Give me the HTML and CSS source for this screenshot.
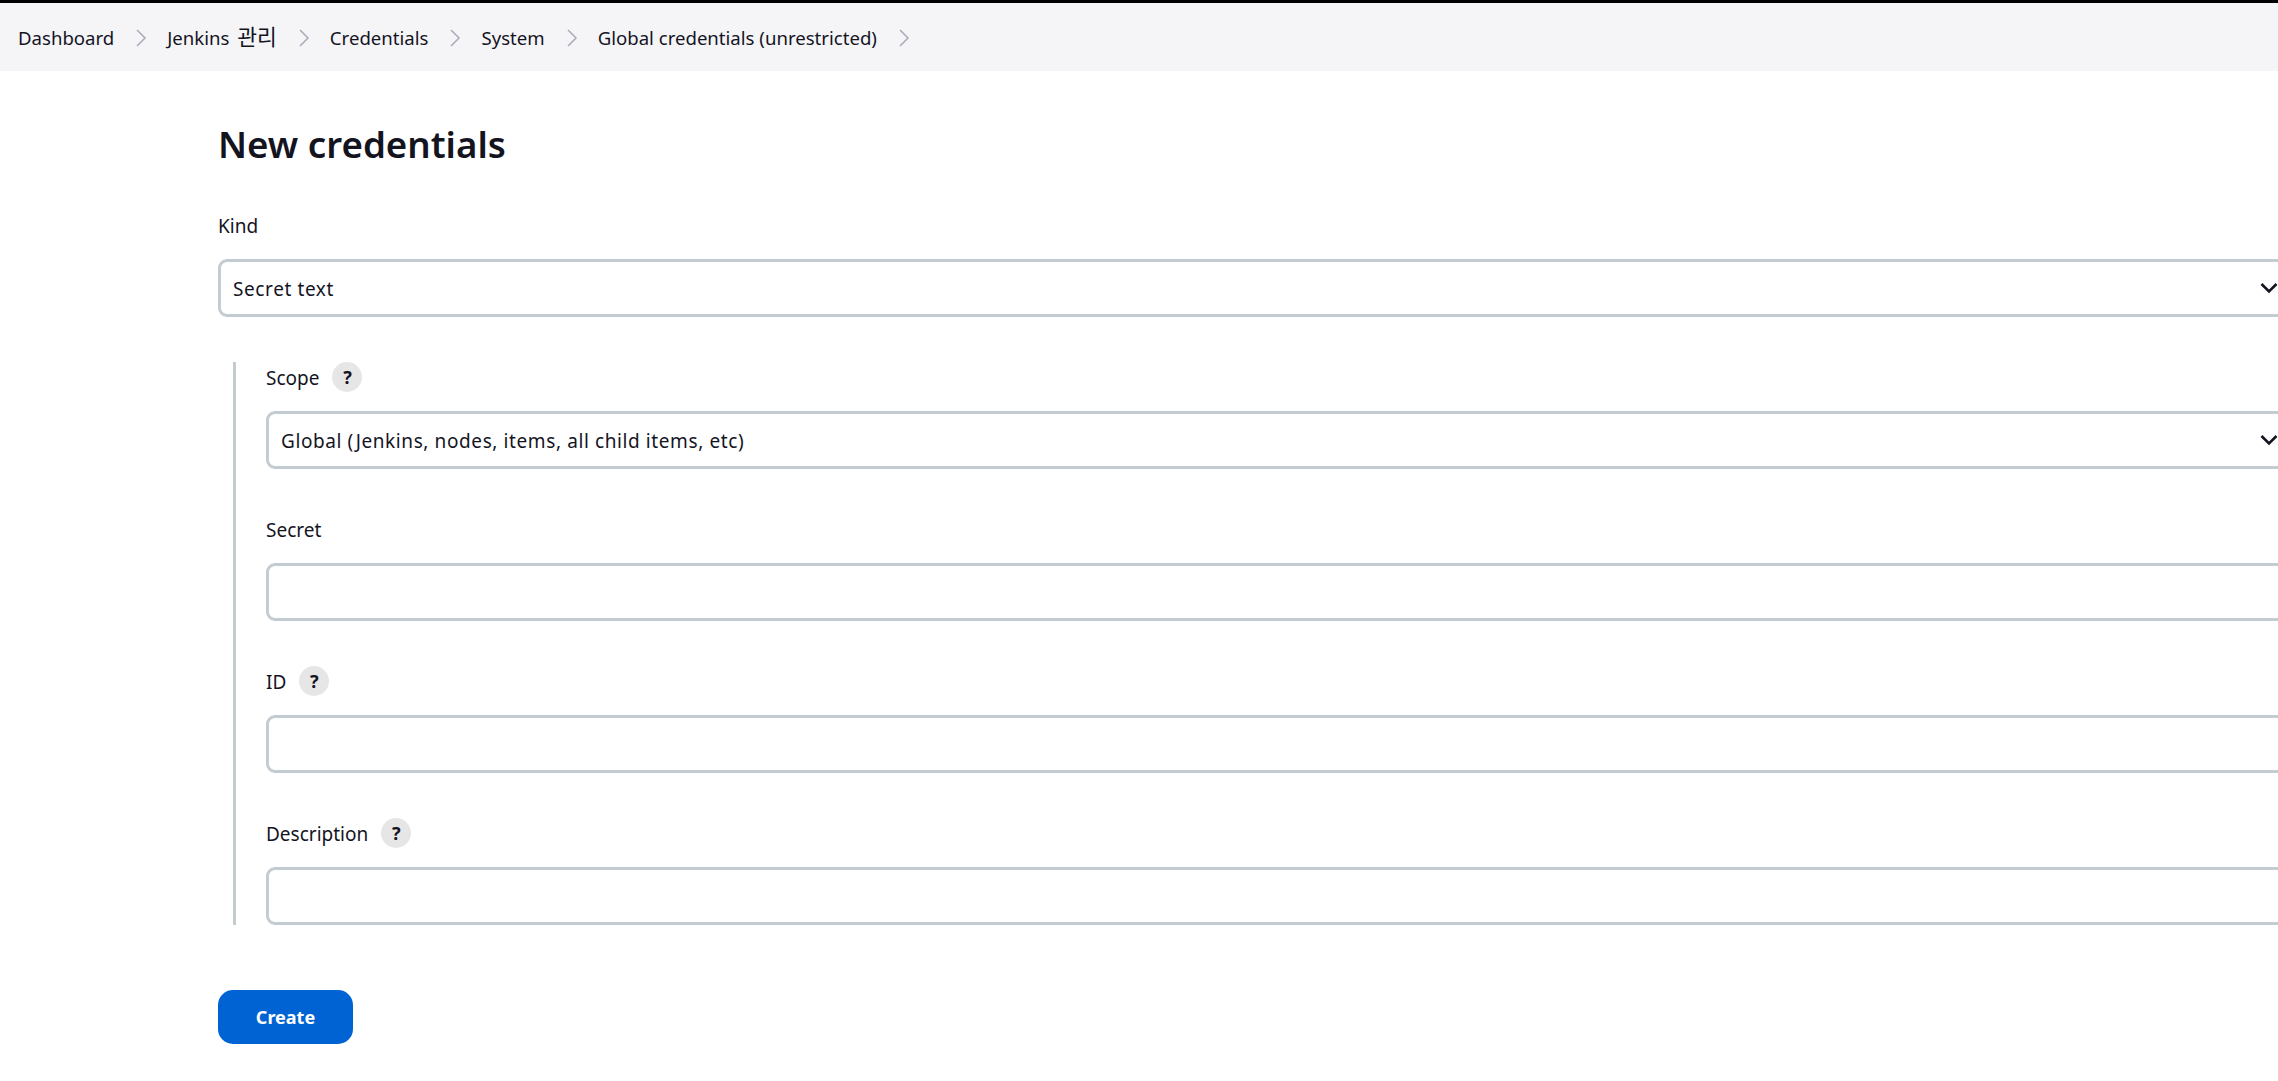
FILE: index.html
```html
<!DOCTYPE html>
<html lang="en">
<head>
<meta charset="utf-8">
<title>New credentials</title>
<link rel="stylesheet" href="styles.css">
</head>
<body>
<nav class="crumbs">
  <a class="crumb">Dashboard</a><svg class="sep" viewBox="0 0 12 20"><path d="M2 2l8 8-8 8"/></svg>
  <a class="crumb">Jenkins <span class="ko">관리</span></a><svg class="sep" viewBox="0 0 12 20"><path d="M2 2l8 8-8 8"/></svg>
  <a class="crumb">Credentials</a><svg class="sep" viewBox="0 0 12 20"><path d="M2 2l8 8-8 8"/></svg>
  <a class="crumb">System</a><svg class="sep" viewBox="0 0 12 20"><path d="M2 2l8 8-8 8"/></svg>
  <a class="crumb">Global credentials (unrestricted)</a><svg class="sep" viewBox="0 0 12 20"><path d="M2 2l8 8-8 8"/></svg>
</nav>
<main class="main">
  <h1 class="title">New credentials</h1>
  <div class="field">
    <div class="label-row"><span class="label">Kind</span></div>
    <div class="control"><span class="value">Secret text</span><svg class="chev" viewBox="0 0 18 12"><path d="M1.5 2l7.500 7.500 7.500-7.500"/></svg></div>
  </div>
  <div class="nested">
    <div class="field">
      <div class="label-row"><span class="label">Scope</span><span class="help">?</span></div>
      <div class="control"><span class="value">Global (Jenkins, nodes, items, all child items, etc)</span><svg class="chev" viewBox="0 0 18 12"><path d="M1.5 2l7.500 7.500 7.500-7.500"/></svg></div>
    </div>
    <div class="field">
      <div class="label-row"><span class="label">Secret</span></div>
      <div class="control"></div>
    </div>
    <div class="field">
      <div class="label-row"><span class="label">ID</span><span class="help">?</span></div>
      <div class="control"></div>
    </div>
    <div class="field">
      <div class="label-row"><span class="label">Description</span><span class="help">?</span></div>
      <div class="control"></div>
    </div>
  </div>
  <button class="create">Create</button>
</main>
</body>
</html>
```

FILE: styles.css
```css
html, body { margin: 0; padding: 0; height: 100%; overflow: hidden; background: #fff; }
body { border-top: 3px solid #000; box-sizing: border-box; font-family: "Noto Sans", "Noto Sans CJK KR", sans-serif; font-size: 19px; color: #14141f; }
.crumbs { height: 68px; background: #f5f5f8; display: flex; align-items: center; padding: 1px 0 0 18px; box-sizing: border-box; font-size: 18.6px; }
.crumb { white-space: nowrap; }
.ko { font-size: 21.5px; line-height: 1; margin-left: 3px; }
.sep { width: 12px; height: 20px; margin: 0 20px 0 21px; flex: none; }
.sep path { fill: none; stroke: #a9a9b8; stroke-width: 1.5; }
.main { padding-left: 218px; width: 2072px; }
.title { margin: 0; height: 139px; padding-top: 48px; box-sizing: border-box; font-size: 36.7px; font-weight: 600; line-height: 50px; }
.field { margin-bottom: 45px; }
.label-row { height: 30px; margin-bottom: 19px; display: flex; align-items: center; gap: 13px; }
.label { position: relative; top: 1px; }
.control { height: 58px; box-sizing: border-box; border: 3px solid #c3ccd1; border-radius: 9px; display: flex; align-items: center; justify-content: space-between; padding: 0 9px 0 12px; }
.value { letter-spacing: 0.6px; padding-top: 2px; }
.chev { width: 18px; height: 12px; flex: none; }
.chev path { fill: none; stroke: #14141f; stroke-width: 2.6; }
.help { width: 30px; height: 30px; border-radius: 50%; background: #e6e6e6; display: flex; align-items: center; justify-content: center; font-size: 18px; font-weight: 700; }
.nested { margin-left: 15px; border-left: 3px solid #c3ccd1; padding-left: 30px; }
.nested .field:last-child { margin-bottom: 0; }
.create { display: block; margin-top: 65px; width: 135px; height: 54px; border: 0; border-radius: 15px; background: #0063d3; color: #fff; font: 700 18px "Noto Sans", "Noto Sans CJK KR", sans-serif; }
```
